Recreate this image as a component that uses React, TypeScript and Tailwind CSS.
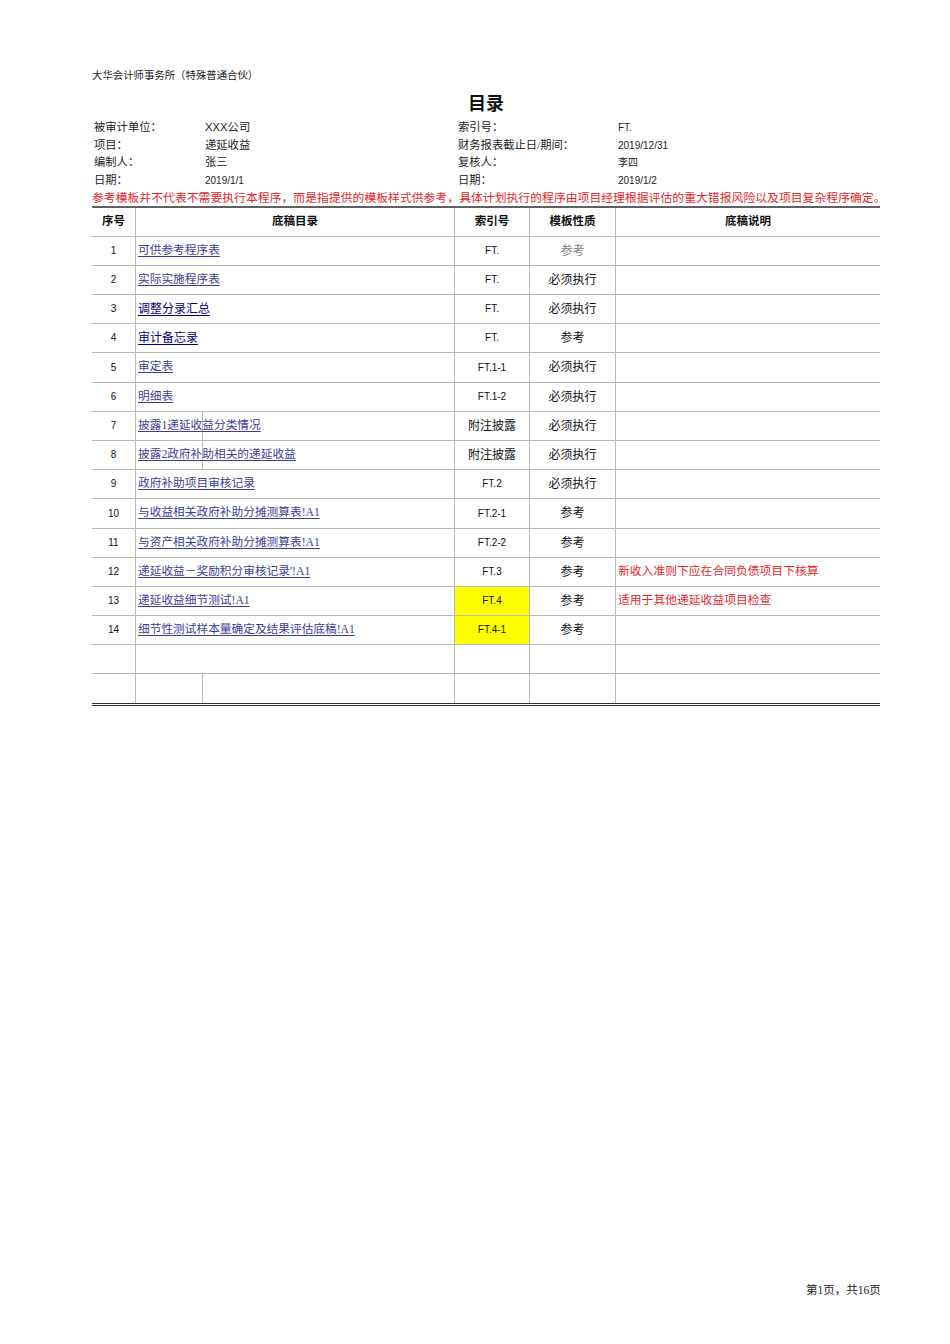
import React from "react";

const SANS = '"Liberation Sans", Arial, "Noto Sans CJK SC", sans-serif';
const SERIF = '"Liberation Serif", "Noto Sans CJK SC", serif';

type Row = {
  n?: string;
  name?: string;
  nameStyle?: "serif" | "sans";
  idx?: string;
  idxBig?: boolean;
  yellow?: boolean;
  kind?: string;
  kindGray?: boolean;
  note?: string;
  split?: boolean;
};

const rows: Row[] = [
  { n: "1", name: "可供参考程序表", nameStyle: "serif", idx: "FT.", kind: "参考", kindGray: true },
  { n: "2", name: "实际实施程序表", nameStyle: "serif", idx: "FT.", kind: "必须执行" },
  { n: "3", name: "调整分录汇总", nameStyle: "sans", idx: "FT.", kind: "必须执行" },
  { n: "4", name: "审计备忘录", nameStyle: "sans", idx: "FT.", kind: "参考" },
  { n: "5", name: "审定表", nameStyle: "serif", idx: "FT.1-1", kind: "必须执行" },
  { n: "6", name: "明细表", nameStyle: "serif", idx: "FT.1-2", kind: "必须执行" },
  { n: "7", name: "披露1递延收益分类情况", nameStyle: "serif", idx: "附注披露", idxBig: true, kind: "必须执行", split: true },
  { n: "8", name: "披露2政府补助相关的递延收益", nameStyle: "serif", idx: "附注披露", idxBig: true, kind: "必须执行", split: true },
  { n: "9", name: "政府补助项目审核记录", nameStyle: "serif", idx: "FT.2", kind: "必须执行" },
  { n: "10", name: "与收益相关政府补助分摊测算表!A1", nameStyle: "serif", idx: "FT.2-1", kind: "参考" },
  { n: "11", name: "与资产相关政府补助分摊测算表!A1", nameStyle: "serif", idx: "FT.2-2", kind: "参考" },
  { n: "12", name: "递延收益－奖励积分审核记录'!A1", nameStyle: "serif", idx: "FT.3", kind: "参考", note: "新收入准则下应在合同负债项目下核算" },
  { n: "13", name: "递延收益细节测试!A1", nameStyle: "serif", idx: "FT.4", yellow: true, kind: "参考", note: "适用于其他递延收益项目检查" },
  { n: "14", name: "细节性测试样本量确定及结果评估底稿!A1", nameStyle: "serif", idx: "FT.4-1", yellow: true, kind: "参考" },
  {},
  { split: true },
];

const info: [string, string, string, string][] = [
  ["被审计单位：", "XXX公司", "索引号：", "FT."],
  ["项目：", "递延收益", "财务报表截止日/期间：", "2019/12/31"],
  ["编制人：", "张三", "复核人：", "李四"],
  ["日期：", "2019/1/1", "日期：", "2019/1/2"],
];

const isLatin = (s: string) => /^[\x00-\x7f]+$/.test(s);

export default function App() {
  return (
    <div className="w-[950px] h-[1344px] bg-white relative text-[#111]" style={{ fontFamily: SANS }}>
      <div className="pl-[92px] pr-[70px] pt-[69px]">
        <div className="text-[10.4px] leading-[14px] text-[#222]" style={{ fontFamily: SERIF }}>
          大华会计师事务所（特殊普通合伙）
        </div>
        <div className="mt-[9px] h-[24px] text-center text-[18px] leading-[24px] font-bold">目录</div>
        <div className="mt-[3px] pl-[2px]">
          {info.map((r, i) => (
            <div key={i} className="grid grid-cols-[111px_253px_160px_1fr] h-[17.7px] items-center text-[11.3px] leading-[17.7px] text-[#222]">
              <span style={{ fontFamily: SERIF }}>{r[0]}</span>
              <span className={isLatin(r[1]) ? "text-[10px]" : ""} style={{ fontFamily: SANS }}>{r[1]}</span>
              <span style={{ fontFamily: SERIF }}>{r[2]}</span>
              <span className="text-[10px]">{r[3]}</span>
            </div>
          ))}
        </div>
        <div className="h-[16px] leading-[16px] text-[11.85px] text-[#e8262b] whitespace-nowrap" style={{ fontFamily: SERIF }}>
          参考模板并不代表不需要执行本程序，而是指提供的模板样式供参考，具体计划执行的程序由项目经理根据评估的重大错报风险以及项目复杂程序确定。
        </div>

        <div className="w-[788px] border-t-2 border-[#606060] border-b-[3px] border-b-[#333] border-double">
          <div className="grid grid-cols-[44px_319px_75px_86px_264px] h-[29px] border-b border-[#b8b8b8] text-[11.5px] font-bold">
            <div className="flex items-center justify-center border-r border-[#b8b8b8]">序号</div>
            <div className="flex items-center justify-center border-r border-[#b8b8b8]">底稿目录</div>
            <div className="flex items-center justify-center border-r border-[#b8b8b8]">索引号</div>
            <div className="flex items-center justify-center border-r border-[#b8b8b8]">模板性质</div>
            <div className="flex items-center justify-center">底稿说明</div>
          </div>
          {rows.map((r, i) => (
            <div
              key={i}
              className={`grid grid-cols-[44px_319px_75px_86px_264px] ${i === 4 || i === 9 ? "h-[30px]" : "h-[29px]"} ${i < rows.length - 1 ? "border-b border-[#b8b8b8]" : ""}`}
            >
              <div className="flex items-center justify-center border-r border-[#b8b8b8] text-[10px]">{r.n}</div>
              <div className="relative flex items-center pl-[2px] border-r border-[#b8b8b8] whitespace-nowrap">
                {r.split && <div className="absolute left-[66px] top-0 bottom-0 w-px bg-[#b8b8b8]" />}
                {r.name && (
                  r.nameStyle === "sans" ? (
                    <span className="relative text-[12px] text-[#000080] underline underline-offset-2">{r.name}</span>
                  ) : (
                    <span className="relative text-[11.7px] text-[#3c3c9a] underline underline-offset-2" style={{ fontFamily: SERIF }}>{r.name}</span>
                  )
                )}
              </div>
              <div className={`flex items-center justify-center border-r border-[#b8b8b8] ${r.idxBig ? "text-[12px]" : "text-[10px]"} ${r.yellow ? "bg-[#ffff00]" : ""}`}>
                {r.idx}
              </div>
              <div className={`flex items-center justify-center border-r border-[#b8b8b8] text-[12px] ${r.kindGray ? "text-[#808080]" : ""}`}>
                {r.kind}
              </div>
              <div className="flex items-center pl-[2px] text-[11.8px] text-[#e8262b] whitespace-nowrap" style={{ fontFamily: SERIF }}>
                {r.note}
              </div>
            </div>
          ))}
        </div>
      </div>
      <div className="absolute left-[806px] top-[1282px] text-[11.5px] leading-[16px] text-[#222]" style={{ fontFamily: SERIF }}>
        第1页，共16页
      </div>
    </div>
  );
}
